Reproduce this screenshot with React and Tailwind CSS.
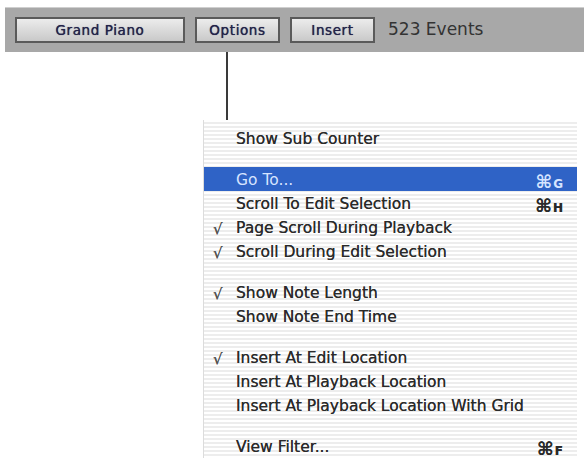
// App.jsx
const items = [
  { type: "item", label: "Show Sub Counter" },
  { type: "sep" },
  { type: "item", label: "Go To...", key: "G", active: true },
  { type: "item", label: "Scroll To Edit Selection", key: "H" },
  { type: "item", label: "Page Scroll During Playback", check: true },
  { type: "item", label: "Scroll During Edit Selection", check: true },
  { type: "sep" },
  { type: "item", label: "Show Note Length", check: true },
  { type: "item", label: "Show Note End Time" },
  { type: "sep" },
  { type: "item", label: "Insert At Edit Location", check: true },
  { type: "item", label: "Insert At Playback Location" },
  { type: "item", label: "Insert At Playback Location With Grid" },
  { type: "sep" },
  { type: "item", label: "View Filter...", key: "F" },
];

function ToolButton({ label, w }) {
  return (
    <div
      className={`${w} h-[26px] flex items-center justify-center border-2 border-[#5a5a5a] bg-gradient-to-b from-[#ececec] to-[#c9c9c9] text-[13.5px] text-[#23234a] tracking-[0.6px] [text-shadow:0_0_0.7px_#23234a]`}
    >
      {label}
    </div>
  );
}

function MenuRow({ item }) {
  if (item.type === "sep") return <div className="h-[17px]" />;
  return (
    <div
      className={`h-6 pt-[4px] flex items-center pr-[14px] ${
        item.active
          ? "bg-[#2f63c6] text-[#d6e4ff]"
          : "text-[#2a2a2a] [text-shadow:0_0_0.6px_#444]"
      }`}
    >
      <span className="w-[32px] pl-[9px] text-[#555] text-[15px]">
        {item.check ? "√" : ""}
      </span>
      <span className="flex-1 text-[15.5px]">{item.label}</span>
      {item.key && (
        <span className="flex items-baseline font-bold">
          <span className="text-[18px] mr-[1px]">⌘</span>
          <span className="text-[12px]">{item.key}</span>
        </span>
      )}
    </div>
  );
}

export default function App() {
  return (
    <div className="w-[584px] h-[459px] overflow-hidden bg-white font-['DejaVu_Sans',sans-serif]">
      {/* toolbar */}
      <div className="mt-[7px] ml-[5px] h-[45px] bg-[#a8a8a8] border-t border-[#cfcfcf] flex items-center pl-[10px] gap-[10px]">
        <ToolButton label="Grand Piano" w="w-[170px]" />
        <ToolButton label="Options" w="w-[85px]" />
        <ToolButton label="Insert" w="w-[85px]" />
        <span className="ml-[3px] text-[17px] text-[#333]">523 Events</span>
      </div>

      {/* popup menu */}
      <div className="pl-[203px]">
        <div className="ml-[23px] w-[2px] h-[68px] bg-[#3a3a3a]" />
        <div className="w-[374px] pt-[6px] border-l border-[#dcdcdc] bg-[repeating-linear-gradient(180deg,#ffffff_0px,#ffffff_2px,#ededed_2px,#ededed_4px)]">
          {items.map((item, i) => (
            <MenuRow key={i} item={item} />
          ))}
        </div>
      </div>
    </div>
  );
}
